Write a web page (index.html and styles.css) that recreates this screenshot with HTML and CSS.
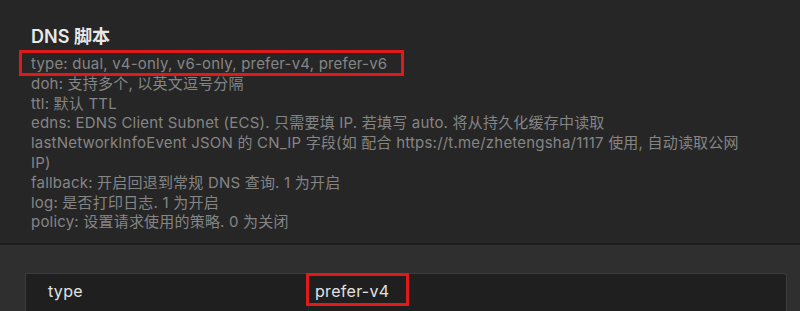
FILE: index.html
```html
<!DOCTYPE html>
<html lang="zh-CN">
<head>
    <meta charset="UTF-8">
    <meta name="viewport" content="width=device-width, initial-scale=1.0">
    <title>DNS 脚本</title>
    <link rel="stylesheet" href="styles.css">
</head>
<body>
    <div class="panel">
        <h2 class="title">DNS 脚本</h2>
        <div class="desc">
            <p><span class="mark">type: dual, v4-only, v6-only, prefer-v4, prefer-v6</span></p>
            <p>doh: 支持多个, 以英文逗号分隔</p>
            <p>ttl: 默认 TTL</p>
            <p>edns: EDNS Client Subnet (ECS). 只需要填 IP. 若填写 auto. 将从持久化缓存中读取 lastNetworkInfoEvent JSON 的 CN_IP 字段(如 配合 https://t.me/zhetengsha/1117 使用, 自动读取公网 IP)</p>
            <p>fallback: 开启回退到常规 DNS 查询. 1 为开启</p>
            <p>log: 是否打印日志. 1 为开启</p>
            <p>policy: 设置请求使用的策略. 0 为关闭</p>
        </div>
    </div>

    <div class="content">
        <div class="table">
            <div class="row">
                <div class="key">type</div>
                <div class="val"><span class="mark mark-val">prefer-v4</span></div>
            </div>
        </div>
    </div>
</body>
</html>
```

FILE: styles.css
```css
* {
    margin: 0;
    padding: 0;
    box-sizing: border-box;
    font-family: 'Inter', 'Noto Sans CJK SC', sans-serif;
}

body {
    background-color: #2f2f2f;
    width: 800px;
    height: 311px;
    overflow: hidden;
}

.panel {
    background-color: #262626;
    height: 245px;
    border-bottom: 2px solid #1d1d1d;
    padding: 26px 50px 0 31px;
}

.title {
    font-size: 18px;
    line-height: 22px;
    font-weight: 600;
    color: #e8e8e8;
    margin-bottom: 6px;
}

.desc p {
    font-size: 15px;
    line-height: 19.8px;
    letter-spacing: 0.2px;
    color: #858585;
}

/* red annotation boxes */
.mark {
    position: relative;
}

.mark::after {
    content: '';
    position: absolute;
    left: -12px;
    right: -17px;
    top: -4px;
    bottom: -3px;
    border: 3px solid #e01a1a;
}

.content {
    padding: 28px 13px 0 25px;
}

.table {
    background-color: #1f1f1f;
    border: 1px solid #3c3c3c;
    border-bottom: none;
    border-radius: 0 4px 0 0;
}

.row {
    display: flex;
    height: 40px;
}

.key {
    width: 283px;
    padding: 7px 0 0 22px;
    font-size: 16px;
    letter-spacing: 0.3px;
    color: #e2e2e2;
    border-right: 1px solid #2a2a2a;
}

.val {
    padding: 7px 0 0 6px;
    font-size: 16px;
    letter-spacing: 0.3px;
    color: #e2e2e2;
}

.mark-val::after {
    left: -9px;
    right: -20px;
    top: -8px;
    bottom: -5px;
}
```
